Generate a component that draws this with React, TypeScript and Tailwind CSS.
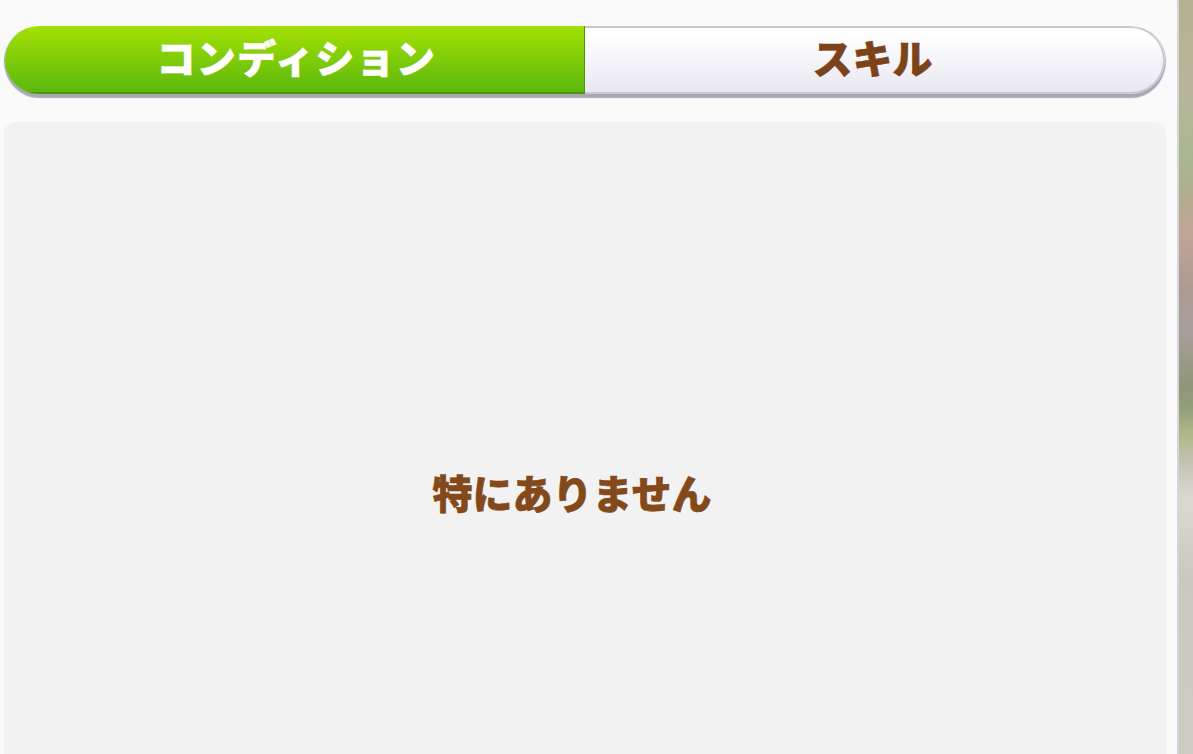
import React from 'react';

const font = "font-['Noto_Sans_CJK_JP','Noto_Sans',sans-serif] font-black";

export default function App() {
  return (
    <div className="flex h-[754px] w-[1193px] overflow-hidden bg-[#fafafa]">
      {/* 左パネル */}
      <div className="flex w-[1179px] shrink-0 flex-col border-r-2 border-[#d4d4d9] bg-[#fafafa] pl-[5px] pt-[26px]">
        <div className="flex h-[68px] w-[1160px] shrink-0 overflow-hidden rounded-[34px] shadow-[0_4px_1px_#aaa8b6,1px_1px_1px_#b8b7c2,-1px_1px_1px_#9a9aa0]">
          <div className={`flex h-full w-[580px] items-center justify-center border-b-2 border-r border-[#4a960c] bg-[linear-gradient(#a4e104,#5cb70d)] pb-[6px] text-[39px] leading-none tracking-[1.4px] text-white [-webkit-text-stroke:0.6px_#fff] ${font}`}>
            <span className="ml-[4px]">コンディション</span>
          </div>
          <div className={`flex h-full flex-1 items-center justify-center rounded-r-[34px] border-2 border-l-0 border-[#c9c8d0] bg-[linear-gradient(#ffffff_10%,#e9e7f1)] pb-[6px] text-[40px] leading-none text-[#7c431a] [-webkit-text-stroke:0.6px_#7c431a] ${font}`}>
            <span className="ml-[-3px]">スキル</span>
          </div>
        </div>
        <div className="ml-[-1px] mt-[28px] flex h-[740px] w-[1162px] shrink-0 items-center justify-center rounded-t-[12px] bg-[#f2f2f2]">
          <span className={`ml-[-26px] text-[40px] leading-none text-[#83491b] [-webkit-text-stroke:0.6px_#83491b] ${font}`}>
            特にありません
          </span>
        </div>
      </div>
      {/* 右端の背景 */}
      <div className="flex-1 bg-[linear-gradient(#b4b28e_0px,#b6b59a_90px,#a9b78e_160px,#b3ab90_200px,#c0a598_235px,#ac9a92_290px,#a79f9d_330px,#8f9678_387px,#93a07a_410px,#b0ba8a_436px,#c5c2b5_463px,#dcd9d0_500px,#c9c9c0_576px,#ccccc3_754px)]" />
    </div>
  );
}
